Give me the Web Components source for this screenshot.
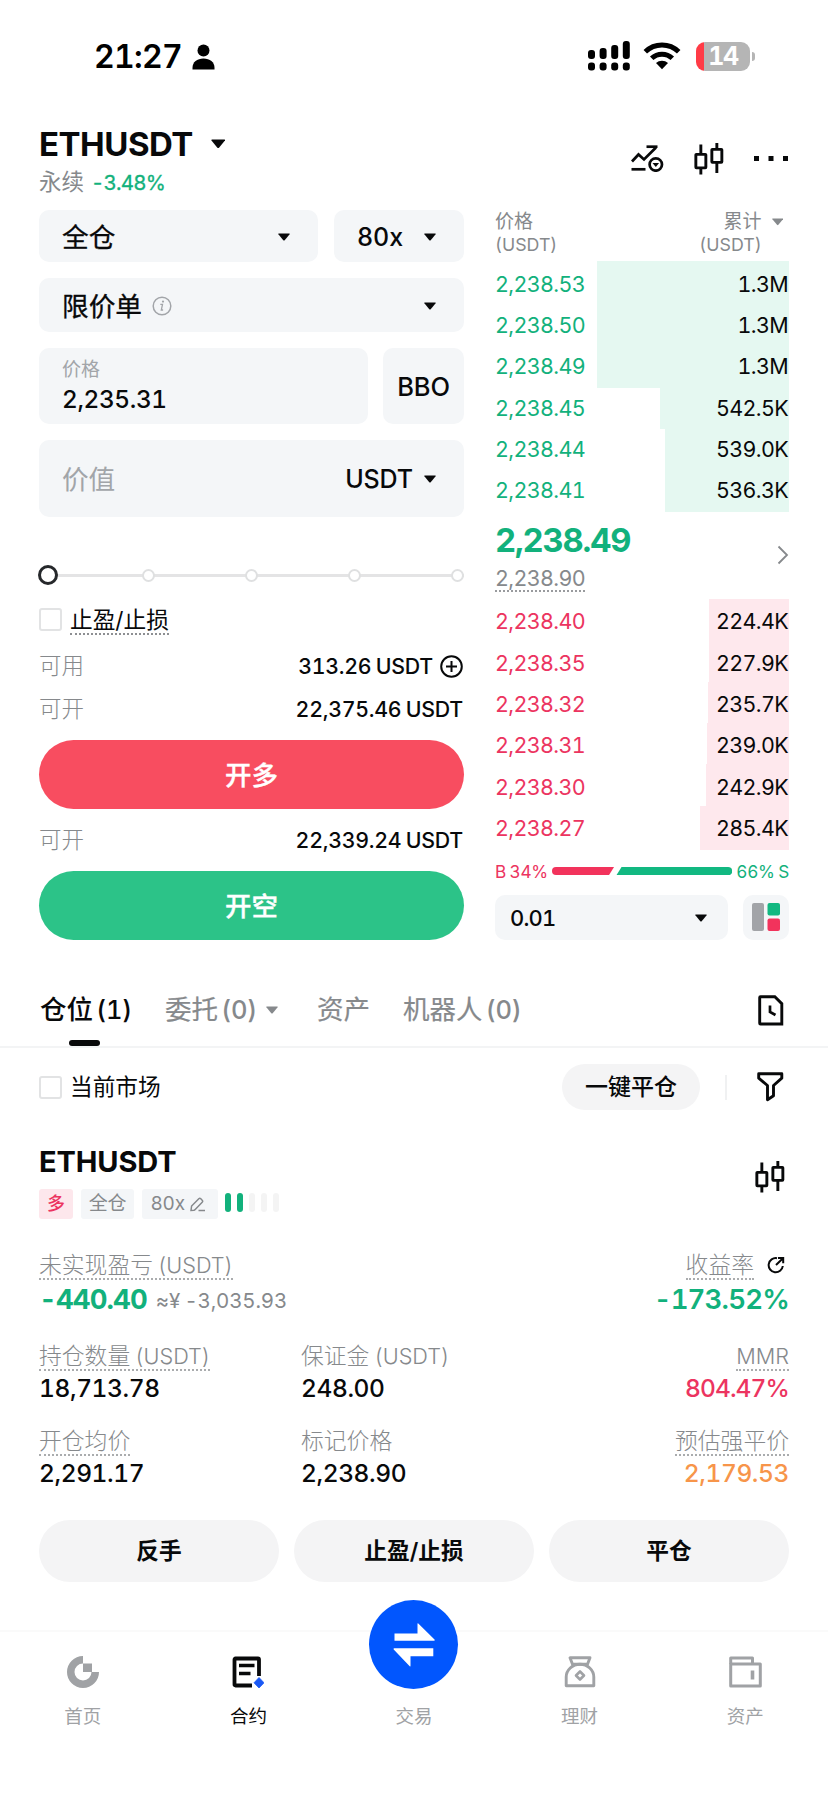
<!DOCTYPE html>
<html lang="zh-CN">
<head>
<meta charset="utf-8">
<meta name="viewport" content="width=828">
<title>ETHUSDT</title>
<style>
  body {
    margin: 0;
    background: #fff;
    color: #08090a;
    font-family: Inter, "Noto Sans CJK SC", sans-serif;
    font-variant-numeric: tabular-nums;
    --green: #12b17c;
    --red: #ec3460;
    --orange: #f7954a;
    --muted: #86898c;
    --faint: #a2a5a9;
    --field: #f4f6f8;
    --pill: #f4f4f5;
  }
</style>
</head>
<body>
<trade-app></trade-app>

<script>
/**
 * Creates a template element from a markup string.
 *
 * @param {string} html - The markup.
 * @returns {HTMLTemplateElement} The template.
 */
const template = (html) => {
  const element = document.createElement('template')
  element.innerHTML = html
  return element
}

/**
 * Base class that attaches an open shadow root and clones the template of the subclass into it.
 */
class BaseElement extends HTMLElement {
  /**
   * Constructs the element.
   */
  constructor () {
    super()
    this.attachShadow({ mode: 'open' }).appendChild(this.constructor.template.content.cloneNode(true))
  }

  /**
   * Shortcut for querying the shadow root.
   *
   * @param {string} selector - The selector.
   * @returns {Element} The first match.
   */
  $ (selector) {
    return this.shadowRoot.querySelector(selector)
  }
}

/* Each icon is [width, height, markup], drawn at its natural size. */
const ICONS = {
  person: [23, 26, '<circle cx="11.5" cy="6.5" r="6" fill="currentColor"/><path d="M.5 25.5v-1.500C.5 18 5 14.500 11.500 14.500S22.500 18 22.500 24v1.500z" fill="currentColor"/>'],
  signal: [42, 30, '<g fill="currentColor"><rect x="0" y="9" width="7" height="9" rx="3"/><rect x="11.600" y="7" width="7" height="11" rx="3"/><rect x="23.200" y="4" width="7" height="14" rx="3"/><rect x="34.800" y="0" width="7" height="18" rx="3"/><rect x="0" y="21.500" width="7" height="8" rx="3"/><rect x="11.600" y="21.500" width="7" height="8" rx="3"/><rect x="23.200" y="21.500" width="7" height="8" rx="3"/><rect x="34.800" y="21.500" width="7" height="8" rx="3"/></g>'],
  wifi: [38, 28, '<g fill="none" stroke="currentColor" stroke-width="5"><path d="M2.300 9.700a24 24 0 0 1 33.400 0"/><path d="M8.700 16.300a15 15 0 0 1 20.600 0"/></g><path d="M19 27.300l-6-6.200a9 9 0 0 1 12 0z" fill="currentColor"/>'],
  down: [12, 8, '<path d="M.8.500h10.400q.9 0 .4.800L6.700 7.200q-.7.700-1.400 0L.4 1.300Q-.1.500.8.500z" fill="currentColor"/>'],
  strategy: [33, 27, '<g fill="none" stroke="currentColor" stroke-width="2.700"><path d="M1 16.500L7.500 9.500l5.500 5L25 2.500"/><path d="M15.500 1.700H26.500"/><path d="M.5 24.300h14"/><circle cx="24.800" cy="19.500" r="6.200"/></g><path d="M21.500 18h6.600l-3.300 4z" fill="currentColor"/>'],
  candles: [30, 33, '<g fill="none" stroke="currentColor" stroke-width="2.900"><rect x="1.850" y="12.350" width="10" height="13.500" rx=".5"/><rect x="17.850" y="7.350" width="10" height="13" rx=".5"/><path d="M6.850 2.500v10M6.850 26v6.500M22.850 1v6M22.850 20.500V31"/></g>'],
  more: [35, 5, '<g fill="currentColor"><rect x="0" width="5" height="5"/><rect x="14.500" width="5" height="5"/><rect x="29" width="5" height="5"/></g>'],
  info: [20, 20, '<circle cx="10" cy="10" r="8.800" fill="none" stroke="currentColor" stroke-width="1.500"/><path d="M8.300 8.300h2.200L9.300 14h1.800" fill="none" stroke="currentColor" stroke-width="1.300"/><circle cx="11" cy="5.600" r="1.100" fill="currentColor"/>'],
  plus: [23, 23, '<g fill="none" stroke="currentColor" stroke-width="2"><circle cx="11.500" cy="11.500" r="10.300"/><path d="M11.500 6v11M6 11.500h11"/></g>'],
  chevron: [12, 20, '<path d="M1.500 1.500l8.500 8.500-8.500 8.500" fill="none" stroke="currentColor" stroke-width="1.800"/>'],
  book: [28, 28, '<rect width="12" height="28" rx="2" fill="#a2a4a8"/><rect x="15.500" width="12.500" height="12.500" rx="2" fill="#12b881"/><rect x="15.500" y="15.500" width="12.500" height="12.500" rx="2" fill="#f2335c"/>'],
  history: [26, 31, '<path d="M2.500 1.700h14.300l7 7V29H2.500q-.8 0-.8-.8V2.500q0-.8.8-.8z" fill="none" stroke="currentColor" stroke-width="2.900"/><path d="M12 10.500v6.500l5.500 3" fill="none" stroke="currentColor" stroke-width="2.700"/>'],
  filter: [27, 30, '<path d="M1.700 1.700h23.100v4.500l-8.300 7.300v10.300l-6 4V13.500L1.700 6.200z" fill="none" stroke="currentColor" stroke-width="2.900" stroke-linejoin="round"/>'],
  edit: [16, 15, '<path d="M1 13.500l.6-4.500L8.800 1.700q1-1 2 0l1.400 1.500q1 1 0 2L5.200 12.500q-.6.600-1.300.7zM8.500 13.500h6.500" fill="none" stroke="currentColor" stroke-width="1.500"/>'],
  share: [18, 18, '<path d="M10 2.200A7.100 7.100 0 1 0 15.800 10" fill="none" stroke="currentColor" stroke-width="2"/><path d="M11 2h5.200v5.200M16 2.200L9 9" fill="none" stroke="currentColor" stroke-width="2"/>'],
  home: [32, 32, '<path d="M16 0a16 16 0 1 0 16 16h-7.500A8.500 8.500 0 1 1 16 7.500z" fill="currentColor"/><rect x="16" y="7.500" width="9" height="8.500" fill="currentColor"/>'],
  contract: [32, 32, '<path d="M20 29.500H3.500q-1 0-1-1V3.500q0-1 1-1H26q1 0 1 1V20" fill="none" stroke="currentColor" stroke-width="3.800"/><path d="M7 9.500h15.500M7 17.500h11.500" fill="none" stroke="currentColor" stroke-width="3.400"/><path d="M27 21.500l5 5.300-5 5.200-5-5.200z" fill="#1a59f5" stroke="#1a59f5" stroke-width=".8" stroke-linejoin="round"/>'],
  finance: [32, 32, '<g fill="none" stroke="currentColor" stroke-width="2.900" stroke-linejoin="round"><path d="M6 1.800h20l-2.500 6.400h-15z"/><path d="M2.200 29.800V21a13.800 12.800 0 0 1 27.600 0v8.800z"/><path d="M16 15.500l4 4-4 4-4-4z" stroke-width="2.600"/></g>'],
  wallet: [33, 32, '<g fill="none" stroke="currentColor" stroke-width="3" stroke-linejoin="round"><rect x="1.700" y="8" width="29.600" height="22"/><path d="M1.700 8V1.900h21.800V8"/></g><path d="M23.500 14.500v9" stroke="currentColor" stroke-width="3.600"/>'],
  swap: [42, 44, '<path d="M1.500 17.700V10.500h23V.8q0-1 .8-.4L41.500 16.500q.8 1.200-.5 1.200zM40.300 25.300v8H17.500v9.500q0 1-.8.400L.7 26.500q-.7-1.200.5-1.200z" fill="#fff"/>']
}

/**
 * Draws the icon that its name attribute gives.
 */
class AppIcon extends BaseElement {
  static template = template(`
    <style>
      :host { display: inline-flex; flex: none; }
      svg { display: block; }
    </style>
    <svg xmlns="http://www.w3.org/2000/svg"></svg>
  `)

  /**
   * Fills the svg when the element is connected.
   */
  connectedCallback () {
    const [width, height, markup] = ICONS[this.getAttribute('name')]
    const scale = Number(this.getAttribute('scale')) || 1
    const svg = this.$('svg')
    svg.setAttribute('viewBox', `0 0 ${width} ${height}`)
    svg.setAttribute('width', width * scale)
    svg.setAttribute('height', height * scale)
    svg.innerHTML = markup
  }
}
customElements.define('app-icon', AppIcon)

/**
 * Phone status bar.
 */
class StatusBar extends BaseElement {
  static template = template(`
    <style>
      :host {
        display: flex;
        align-items: center;
        justify-content: space-between;
        height: 112px;
        padding: 0 73px 0 94px;
        color: #000;
      }
      div { display: flex; align-items: center; }
      .time { font-size: 32px; font-weight: 600; line-height: 36px; letter-spacing: -0.7px; gap: 10px; padding-top: 1px; }
      .system { gap: 13px; }
      .battery {
        width: 54px;
        height: 29px;
        margin-left: 2px;
        border-radius: 9px;
        justify-content: center;
        background: linear-gradient(90deg, #ff3b46 8px, #b5b5b5 8px);
        color: #fff;
        font-size: 25px;
        font-weight: 700;
        letter-spacing: -1.5px;
      }
      .cap { width: 3px; height: 9px; margin-left: 2px; border-radius: 0 4px 4px 0; background: #b5b5b5; }
    </style>
    <div class="time">21:27<app-icon name="person"></app-icon></div>
    <div class="system">
      <app-icon name="signal"></app-icon>
      <app-icon name="wifi"></app-icon>
      <div><div class="battery">14</div><div class="cap"></div></div>
    </div>
  `)
}
customElements.define('status-bar', StatusBar)

/**
 * Market name, change and the tools on the right.
 */
class MarketHeader extends BaseElement {
  static template = template(`
    <style>
      :host {
        display: flex;
        justify-content: space-between;
        box-sizing: border-box;
        height: 98px;
        padding: 12px 39px 0 39px;
      }
      h1 {
        display: flex;
        align-items: center;
        gap: 18px;
        margin: 0;
        font-size: 33px;
        font-weight: 700;
        letter-spacing: -.5px;
        line-height: 40px;
      }
      p { margin: 6px 0 0; font-size: 20.500px; line-height: 24px; color: var(--muted); }
      .cjk { font-size: 22.5px; }
      b { margin-left: 7px; font-weight: 400; color: var(--green); letter-spacing: -.8px; -webkit-text-stroke: .3px; }
      .tools { display: flex; align-items: center; height: 68px; gap: 30px; }
    </style>
    <div>
      <h1><span>ETHUSDT</span><app-icon name="down" scale="1.2"></app-icon></h1>
      <p><span class="cjk">永续</span><b>-3.48%</b></p>
    </div>
    <div class="tools">
      <app-icon name="strategy"></app-icon>
      <app-icon name="candles"></app-icon>
      <app-icon name="more"></app-icon>
    </div>
  `)
}
customElements.define('market-header', MarketHeader)

/**
 * Grey rounded field; an "arrow" attribute adds the drop-down mark.
 */
class FormField extends BaseElement {
  static template = template(`
    <style>
      :host {
        display: flex;
        align-items: center;
        justify-content: space-between;
        box-sizing: border-box;
        padding: 1px 28px 0 23px;
        border-radius: 10px;
        background: var(--field);
        font-size: 25px;
        font-weight: 500;
        line-height: 32px;
        letter-spacing: -.1px;
      }
      :host([plain]) { justify-content: center; padding: 0; }
      .main { display: flex; align-items: center; flex: 1; }
      :host([plain]) .main { flex: none; }
      app-icon { display: none; }
      :host([arrow]) app-icon { display: block; }
    </style>
    <div class="main"><slot></slot></div>
    <slot name="end"></slot>
    <app-icon name="down"></app-icon>
  `)
}
customElements.define('form-field', FormField)

/**
 * Amount slider with five stops.
 */
class AmountSlider extends BaseElement {
  static template = template(`
    <style>
      :host {
        display: flex;
        align-items: center;
        justify-content: space-between;
        height: 22px;
        background: linear-gradient(#e4e4e5, #e4e4e5) center / 100% 3px no-repeat;
      }
      i { box-sizing: border-box; width: 13px; height: 13px; border: 2px solid #dfe0e1; border-radius: 50%; background: #fff; }
      .thumb { width: 20px; height: 20px; margin: 0 -6px 0 -1px; border: 3px solid #26282b; }
    </style>
    <i class="thumb"></i><i></i><i></i><i></i><i></i>
  `)
}
customElements.define('amount-slider', AmountSlider)

/**
 * Unticked check box with a slotted caption.
 */
class CheckItem extends BaseElement {
  static template = template(`
    <style>
      :host { display: flex; align-items: center; gap: 8px; height: 24px; font-size: 22.7px; line-height: 24px; }
      i { box-sizing: border-box; width: 23px; height: 23px; border: 2px solid #e2e3e4; border-radius: 3px; }
      :host([hint]) span { padding-bottom: 1px; margin-top: 4px; border-bottom: 2px dotted #8d8f92; }
    </style>
    <i></i><span><slot></slot></span>
  `)
}
customElements.define('check-item', CheckItem)

/**
 * Label on the left, amount on the right.
 */
class AmountRow extends BaseElement {
  static template = template(`
    <style>
      :host { display: flex; align-items: center; justify-content: space-between; height: 30px; font-size: 22.500px; line-height: 30px; }
      span { color: var(--muted); font-weight: 300; }
      div { display: flex; align-items: center; gap: 7px; padding-right: 1px; font-size: 21.300px; font-weight: 500; word-spacing: -1px; letter-spacing: -.25px; }
    </style>
    <span></span><div><slot></slot></div>
  `)

  /**
   * Sets the label.
   */
  connectedCallback () {
    this.$('span').textContent = this.getAttribute('label')
  }
}
customElements.define('amount-row', AmountRow)

/**
 * Order form, the left column of the trading area.
 */
class OrderForm extends BaseElement {
  static template = template(`
    <style>
      :host { display: flex; flex-direction: column; width: 425px; }
      .row { display: grid; gap: 16px; margin-bottom: 16px; }
      .mode { grid-template-columns: 279px 130px; height: 52px; }
      .type { height: 54px; }
      .price { grid-template-columns: 329px 81px; gap: 15px; height: 76px; }
      .value { height: 77px; margin-bottom: 47px; }
      .cjk { font-size: 26.700px; font-weight: 400; letter-spacing: 0; -webkit-text-stroke: .3px; }
      .type app-icon { margin-left: 10px; color: var(--faint); }
      .stack { display: block; padding-bottom: 2px; font-size: 24.300px; letter-spacing: -.35px; }
      .stack small { display: block; height: 26px; font-size: 19px; line-height: 26px; font-weight: 400; color: var(--faint); letter-spacing: 0; }
      .stack span { display: block; line-height: 32px; }
      .ghost { font-size: 26.700px; font-weight: 400; color: var(--faint); }
      .unit { margin-right: 11px; }
      check-item { margin: 21px 0 20px; }
      button {
        height: 69px;
        margin: 16px 0;
        padding: 0;
        border: 0;
        border-radius: 35px;
        color: #fff;
        font: 500 26.500px/71px Inter, "Noto Sans CJK SC", sans-serif;
        -webkit-text-stroke: .3px;
      }
      .long { background: #f84d60; }
      .short { margin-bottom: 0; background: #2cc388; }
    </style>
    <div class="row mode">
      <form-field arrow><span class="cjk">全仓</span></form-field>
      <form-field arrow>80x</form-field>
    </div>
    <div class="row type">
      <form-field arrow><span class="cjk">限价单</span><app-icon name="info"></app-icon></form-field>
    </div>
    <div class="row price">
      <form-field><div class="stack"><small>价格</small><span>2,235.31</span></div></form-field>
      <form-field plain><span style="padding-top: 1px; font-size: 25.500px">BBO</span></form-field>
    </div>
    <div class="row value">
      <form-field arrow><span class="ghost">价值</span><span class="unit" slot="end">USDT</span></form-field>
    </div>
    <amount-slider></amount-slider>
    <check-item hint>止盈/止损</check-item>
    <amount-row label="可用">313.26 USDT<app-icon name="plus"></app-icon></amount-row>
    <amount-row label="可开" style="margin-top: 13px">22,375.46 USDT</amount-row>
    <button class="long">开多</button>
    <amount-row label="可开">22,339.24 USDT</amount-row>
    <button class="short">开空</button>
  `)
}
customElements.define('order-form', OrderForm)

/**
 * One price level of the order book. The depth attribute is the width of the bar in pixels.
 */
class BookRow extends BaseElement {
  static template = template(`
    <style>
      :host {
        position: relative;
        display: flex;
        align-items: center;
        justify-content: space-between;
        height: 41.35px;
        font-size: 21.500px;
        color: var(--green);
        --depth: #e5f8f1;
      }
      :host([side="ask"]) { color: var(--red); --depth: #fee8ed; }
      i { position: absolute; z-index: -1; top: -1.300px; right: 0; bottom: -1.300px; background: var(--depth); }
      span { padding-top: 1px; letter-spacing: -.65px; }
      .sum { padding-right: 1px; color: #08090a; }
    </style>
    <i></i><span class="price"></span><span class="sum"></span>
  `)

  /**
   * Fills the row from its attributes.
   */
  connectedCallback () {
    this.$('.price').textContent = this.getAttribute('price')
    this.$('.sum').textContent = this.getAttribute('sum')
    this.$('i').style.width = `${this.getAttribute('depth')}px`
  }
}
customElements.define('book-row', BookRow)

/**
 * Order book, the right column of the trading area.
 */
class OrderBook extends BaseElement {
  static template = template(`
    <style>
      :host { display: block; position: relative; z-index: 0; width: 294px; }
      header { display: flex; justify-content: space-between; height: 52.400px; font-size: 17.800px; line-height: 23.200px; color: var(--muted); }
      header .right { display: flex; gap: 10px; margin-right: 6px; text-align: right; }
      header app-icon { margin-top: 8px; }
      .cjk { font-size: 19px; }
      .mid { display: flex; align-items: center; justify-content: space-between; height: 89.800px; color: var(--muted); }
      .last { padding-top: 1px; font-size: 32.800px; font-weight: 700; line-height: 40px; letter-spacing: -1.200px; color: var(--green); }
      .mark { display: inline-block; border-bottom: 2px dotted #999b9e; font-size: 21.500px; line-height: 24px; margin-top: 6px; letter-spacing: -.65px; }
      .ratio { display: flex; align-items: center; gap: 4px; height: 24px; margin: 11px 0 11.500px; font-size: 17.200px; word-spacing: -1px; letter-spacing: -.2px; color: var(--green); }
      .ratio span:first-child { color: var(--red); }
      .ratio svg { flex: 1; height: 8px; }
      footer { display: grid; grid-template-columns: 233px 46px; gap: 15px; height: 45px; }
      .step { font-size: 22px; padding: 1px 21px 0 15px; letter-spacing: -.8px; }
    </style>
    <header>
      <div><div class="cjk">价格</div>(USDT)</div>
      <div class="right"><div><div class="cjk">累计</div>(USDT)</div><app-icon name="down" scale=".95"></app-icon></div>
    </header>
    <book-row price="2,238.53" sum="1.3M" depth="192"></book-row>
    <book-row price="2,238.50" sum="1.3M" depth="192"></book-row>
    <book-row price="2,238.49" sum="1.3M" depth="192"></book-row>
    <book-row price="2,238.45" sum="542.5K" depth="129"></book-row>
    <book-row price="2,238.44" sum="539.0K" depth="124"></book-row>
    <book-row price="2,238.41" sum="536.3K" depth="124"></book-row>
    <div class="mid">
      <div><div class="last">2,238.49</div><span class="mark">2,238.90</span></div>
      <app-icon name="chevron"></app-icon>
    </div>
    <book-row side="ask" price="2,238.40" sum="224.4K" depth="80"></book-row>
    <book-row side="ask" price="2,238.35" sum="227.9K" depth="80"></book-row>
    <book-row side="ask" price="2,238.32" sum="235.7K" depth="81"></book-row>
    <book-row side="ask" price="2,238.31" sum="239.0K" depth="82"></book-row>
    <book-row side="ask" price="2,238.30" sum="242.9K" depth="83"></book-row>
    <book-row side="ask" price="2,238.27" sum="285.4K" depth="89"></book-row>
    <div class="ratio">
      <span>B 34%</span>
      <svg viewBox="0 0 180 8" preserveAspectRatio="none">
        <path d="M4 0h58l-5 8H4a4 4 0 0 1 0-8z" fill="#f2335c"/>
        <path d="M69.500 0H176a4 4 0 0 1 0 8H64.500z" fill="#12b881"/>
      </svg>
      <span>66% S</span>
    </div>
    <footer>
      <form-field class="step" arrow>0.01</form-field>
      <form-field plain><app-icon name="book"></app-icon></form-field>
    </footer>
  `)
}
customElements.define('order-book', OrderBook)

/**
 * Tabs over the list of positions.
 */
class PositionTabs extends BaseElement {
  static template = template(`
    <style>
      :host {
        display: flex;
        box-sizing: border-box;
        height: 75px;
        margin-top: 33px;
        padding: 0 44px 0 40px;
        border-bottom: 2px solid #f3f4f5;
        color: var(--muted);
        font-size: 25.500px;
        line-height: 75px;
        font-weight: 500;
        word-spacing: -3.500px;
        letter-spacing: -.2px;
      }
      .tab { display: flex; align-items: center; gap: 9px; margin-right: 33px; white-space: pre; }
      .more { margin-right: 39px; }
      .cjk { font-size: 26.500px; font-weight: 400; letter-spacing: 0; -webkit-text-stroke: .2px; }
      .active { position: relative; color: #08090a; }
      .active .cjk { font-weight: 500; -webkit-text-stroke: 0; }
      .active::after {
        content: "";
        position: absolute;
        left: 29px;
        bottom: 0;
        width: 31px;
        height: 6px;
        border-radius: 3px;
        background: #08090a;
      }
      .history { margin: 1px 0 0 auto; align-self: center; color: #08090a; }
    </style>
    <div class="tab active"><span><span class="cjk">仓位</span> (1)</span></div>
    <div class="tab more"><span><span class="cjk">委托</span> (0)</span><app-icon name="down"></app-icon></div>
    <div class="tab"><span class="cjk">资产</span></div>
    <div class="tab"><span><span class="cjk">机器人</span> (0)</span></div>
    <app-icon class="history" name="history"></app-icon>
  `)
}
customElements.define('position-tabs', PositionTabs)

/**
 * Market filter and the close-all button.
 */
class PositionFilter extends BaseElement {
  static template = template(`
    <style>
      :host { display: flex; align-items: center; height: 78px; padding: 0 44px 0 39px; }
      .close { width: 138px; height: 46px; margin-left: auto; border-radius: 23px; background: var(--pill); font-size: 23px; font-weight: 500; line-height: 46px; text-align: center; }
      i { width: 2px; height: 25px; margin: 0 30px 0 25px; background: #f0f1f2; }
    </style>
    <check-item>当前市场</check-item>
    <div class="close">一键平仓</div>
    <i></i>
    <app-icon name="filter"></app-icon>
  `)
}
customElements.define('position-filter', PositionFilter)

/**
 * Label with a value below it. The tone attribute picks the colour of the value.
 */
class MetricCell extends BaseElement {
  static template = template(`
    <style>
      :host { display: flex; flex-direction: column; align-items: flex-start; }
      :host([end]) { align-items: flex-end; }
      .label { display: flex; align-items: center; height: 28px; gap: 13px; font-size: 21.700px; color: var(--muted); word-spacing: -1px; }
      .label span { height: 27px; line-height: 27px; border-bottom: 2px solid transparent; font-weight: 300; }
      :host([hint]) .label span { border-bottom: 2px dotted #aaacae; }
      .label ::slotted(app-icon) { color: #08090a; }
      .value { display: flex; align-items: center; height: 34px; margin-top: 1px; font-size: 24.500px; font-weight: 500; letter-spacing: -.4px; }
      :host([tone="red"]) .value { color: var(--red); letter-spacing: -.9px; }
      :host([tone="orange"]) .value { color: var(--orange); }
      :host([tone="green"]) .value { margin-top: 3px; color: var(--green); font-size: 27.500px; font-weight: 700; letter-spacing: -.9px; }
      :host([tone="green"][end]) .value { font-weight: 600; letter-spacing: -.8px; }
      ::slotted(small) { margin-left: 9px; padding-top: 2px; color: var(--muted); font-size: 20.500px; font-weight: 400; word-spacing: -1px; letter-spacing: -.15px; }
    </style>
    <div class="label"><span></span><slot name="icon"></slot></div>
    <div class="value"><slot></slot></div>
  `)

  /**
   * Sets the label, with its Chinese part a little larger.
   */
  connectedCallback () {
    const [, cjk, rest] = this.getAttribute('label').match(/^([^\x20-\x7e]*)(.*)$/)
    const big = document.createElement('b')
    big.textContent = cjk
    big.style.cssText = 'font-weight: inherit; font-size: 22.8px'
    this.$('.label span').append(big, rest)
  }
}
customElements.define('metric-cell', MetricCell)

/**
 * An open position with its figures and actions.
 */
class PositionCard extends BaseElement {
  static template = template(`
    <style>
      :host { display: block; padding: 17px 39px 0; }
      .top { display: flex; justify-content: space-between; height: 108px; }
      .top > app-icon { margin: 17px 4px 0 0; }
      h2 { margin: 0 0 10px; font-size: 29px; font-weight: 700; letter-spacing: -.1px; line-height: 38px; height: 36px; }
      .tags { display: flex; gap: 8px; font-size: 19px; line-height: 30px; color: var(--muted); letter-spacing: -.2px; }
      .tags span { display: flex; align-items: center; gap: 5px; height: 30px; padding: 0 8px; border-radius: 3px; background: var(--field); }
      .tags .side { background: #fde7ec; color: var(--red); font-weight: 500; font-size: 18px; }
      .tags .lever { padding-right: 12px; }
      .risk { display: flex; gap: 6px; margin: 4px 0 0 -1px; }
      .risk i { width: 6px; height: 19px; border-radius: 3px; background: #f4f4f4; }
      .risk .on { background: #12b17c; }
      .grid { display: grid; grid-template-columns: 262px 1fr 1fr; }
      .pnl { grid-template-columns: 1fr 1fr; height: 91px; }
      .grid.info { height: 85px; }
      .actions { display: grid; grid-template-columns: repeat(3, 1fr); gap: 15px; padding-top: 8px; }
      .actions div { height: 62px; border-radius: 31px; background: var(--pill); font-size: 22.700px; font-weight: 600; line-height: 62px; text-align: center; }
    </style>
    <div class="top">
      <div>
        <h2>ETHUSDT</h2>
        <div class="tags">
          <span class="side">多</span><span>全仓</span><span class="lever">80x<app-icon name="edit"></app-icon></span>
          <div class="risk"><i class="on"></i><i class="on"></i><i></i><i></i><i></i></div>
        </div>
      </div>
      <app-icon name="candles"></app-icon>
    </div>
    <div class="grid pnl">
      <metric-cell hint tone="green" label="未实现盈亏 (USDT)">-440.40<small>≈¥ -3,035.93</small></metric-cell>
      <metric-cell hint end tone="green" label="收益率"><app-icon slot="icon" name="share" style="margin-right: 4px"></app-icon>-173.52%</metric-cell>
    </div>
    <div class="grid info">
      <metric-cell hint label="持仓数量 (USDT)">18,713.78</metric-cell>
      <metric-cell label="保证金 (USDT)">248.00</metric-cell>
      <metric-cell hint end tone="red" label="MMR">804.47%</metric-cell>
    </div>
    <div class="grid info">
      <metric-cell hint label="开仓均价">2,291.17</metric-cell>
      <metric-cell label="标记价格">2,238.90</metric-cell>
      <metric-cell hint end tone="orange" label="预估强平价">2,179.53</metric-cell>
    </div>
    <div class="actions"><div>反手</div><div>止盈/止损</div><div>平仓</div></div>
  `)
}
customElements.define('position-card', PositionCard)

/**
 * Bottom navigation.
 */
class TabBar extends BaseElement {
  static template = template(`
    <style>
      :host {
        display: grid;
        grid-template-columns: repeat(5, 1fr);
        box-sizing: border-box;
        height: 165px;
        margin-top: 48px;
        border-top: 2px solid #fafafa;
        color: #a0a2a5;
        font-size: 18.500px;
        line-height: 24px;
      }
      div { position: relative; display: flex; flex-direction: column; align-items: center; padding-top: 24px; }
      span { margin-top: 16px; }
      .active { color: #08090a; }
      .trade { padding-top: 72px; }
      .trade span { margin-top: 0; }
      .trade i { position: absolute; top: -32px; display: flex; align-items: center; justify-content: center; width: 89px; height: 89px; border-radius: 50%; background: #0156fe; }
    </style>
    <div><app-icon name="home"></app-icon><span>首页</span></div>
    <div class="active"><app-icon name="contract"></app-icon><span>合约</span></div>
    <div class="trade"><i><app-icon name="swap"></app-icon></i><span>交易</span></div>
    <div><app-icon name="finance"></app-icon><span>理财</span></div>
    <div><app-icon name="wallet"></app-icon><span>资产</span></div>
  `)
}
customElements.define('tab-bar', TabBar)

/**
 * The whole screen.
 */
class TradeApp extends BaseElement {
  static template = template(`
    <style>
      :host { display: block; width: 828px; height: 1795px; overflow: hidden; }
      main { display: flex; justify-content: space-between; padding: 0 39px; height: 730px; }
    </style>
    <status-bar></status-bar>
    <market-header></market-header>
    <main>
      <order-form></order-form>
      <order-book></order-book>
    </main>
    <position-tabs></position-tabs>
    <position-filter></position-filter>
    <position-card></position-card>
    <tab-bar></tab-bar>
  `)
}
customElements.define('trade-app', TradeApp)
</script>
</body>
</html>
